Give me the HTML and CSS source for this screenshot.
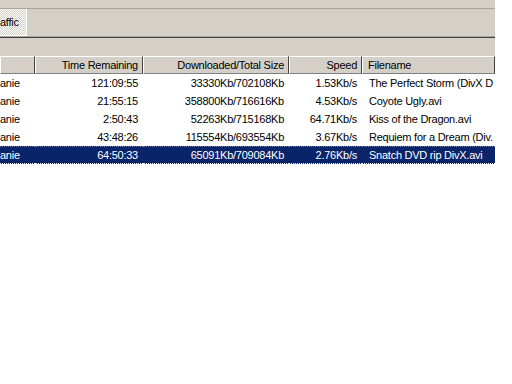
FILE: index.html
```html
<!DOCTYPE html>
<html>
<head>
<meta charset="utf-8">
<link rel="stylesheet" href="styles.css">
</head>
<body>
<div class="window">
  <div class="topstrip"></div>
  <div class="tabbar">
    <div class="tab">affic</div>
  </div>
  <div class="toolbar"></div>
  <div class="list">
    <div class="hcell left"></div>
    <div class="hcell">Time Remaining</div>
    <div class="hcell">Downloaded/Total Size</div>
    <div class="hcell">Speed</div>
    <div class="hcell left">Filename</div>

    <div class="row">
      <div class="cell left">anie</div>
      <div class="cell">121:09:55</div>
      <div class="cell">33330Kb/702108Kb</div>
      <div class="cell">1.53Kb/s</div>
      <div class="cell left name">The Perfect Storm (DivX D</div>
    </div>
    <div class="row">
      <div class="cell left">anie</div>
      <div class="cell">21:55:15</div>
      <div class="cell">358800Kb/716616Kb</div>
      <div class="cell">4.53Kb/s</div>
      <div class="cell left name">Coyote Ugly.avi</div>
    </div>
    <div class="row">
      <div class="cell left">anie</div>
      <div class="cell">2:50:43</div>
      <div class="cell">52263Kb/715168Kb</div>
      <div class="cell">64.71Kb/s</div>
      <div class="cell left name">Kiss of the Dragon.avi</div>
    </div>
    <div class="row">
      <div class="cell left">anie</div>
      <div class="cell">43:48:26</div>
      <div class="cell">115554Kb/693554Kb</div>
      <div class="cell">3.67Kb/s</div>
      <div class="cell left name">Requiem for a Dream (Div.</div>
    </div>
    <div class="row selected">
      <div class="cell left">anie</div>
      <div class="cell">64:50:33</div>
      <div class="cell">65091Kb/709084Kb</div>
      <div class="cell">2.76Kb/s</div>
      <div class="cell left name">Snatch DVD rip DivX.avi</div>
    </div>
  </div>
</div>
</body>
</html>
```
FILE: styles.css
```css
html, body {
  margin: 0;
  padding: 0;
  background: #ffffff;
  width: 512px;
  height: 384px;
  overflow: hidden;
}
.window {
  width: 495px;
  font-family: "Liberation Sans", Arial, sans-serif;
  font-size: 11px;
  letter-spacing: -0.25px;
  color: #000;
}
.topstrip {
  height: 8px;
  background: #d4d0c8;
  border-bottom: 1px solid #a8a59e;
}
.tabbar {
  height: 27px;
  background: #d4d0c8;
  display: flex;
  border-bottom: 1px solid #a8a59e;
}
.tab {
  width: 26px;
  height: 26px;
  line-height: 26px;
  border-right: 1px solid #ffffff;
  border-bottom: 1px solid #ffffff;
  background-color: #e8e6e2;
  background-image: repeating-conic-gradient(#ffffff 0 25%, #d4d0c8 0 50%);
  background-size: 2px 2px;
  overflow: hidden;
  white-space: nowrap;
}
.toolbar {
  height: 18px;
  border-top: 1px solid #404040;
  background: #d4d0c8;
}
.list {
  display: grid;
  grid-template-columns: 35px 108px 146px 73px 133px;
  background: #fff;
}
.hcell {
  height: 16px;
  line-height: 16px;
  background: #d4d0c8;
  border-top: 1px solid #ffffff;
  border-left: 1px solid #ffffff;
  border-right: 1px solid #404040;
  border-bottom: 1px solid #808080;
  text-align: right;
  padding: 0 4px 0 0;
  white-space: nowrap;
  overflow: hidden;
}
.hcell.left {
  text-align: left;
  padding: 0 0 0 5px;
}
.row {
  display: contents;
}
.cell {
  height: 18px;
  line-height: 18px;
  text-align: right;
  padding-right: 5px;
  white-space: nowrap;
  overflow: hidden;
}
.cell.left {
  text-align: left;
  padding-right: 0;
  padding-left: 0;
}
.cell.name {
  padding-left: 7px;
}
.row.selected .cell {
  background: #0a246a;
  color: #ffffff;
  border-top: 1px dotted #6a7aa8;
  border-bottom: 1px dotted #ffffff;
  height: 16px;
  line-height: 16px;
}
```
